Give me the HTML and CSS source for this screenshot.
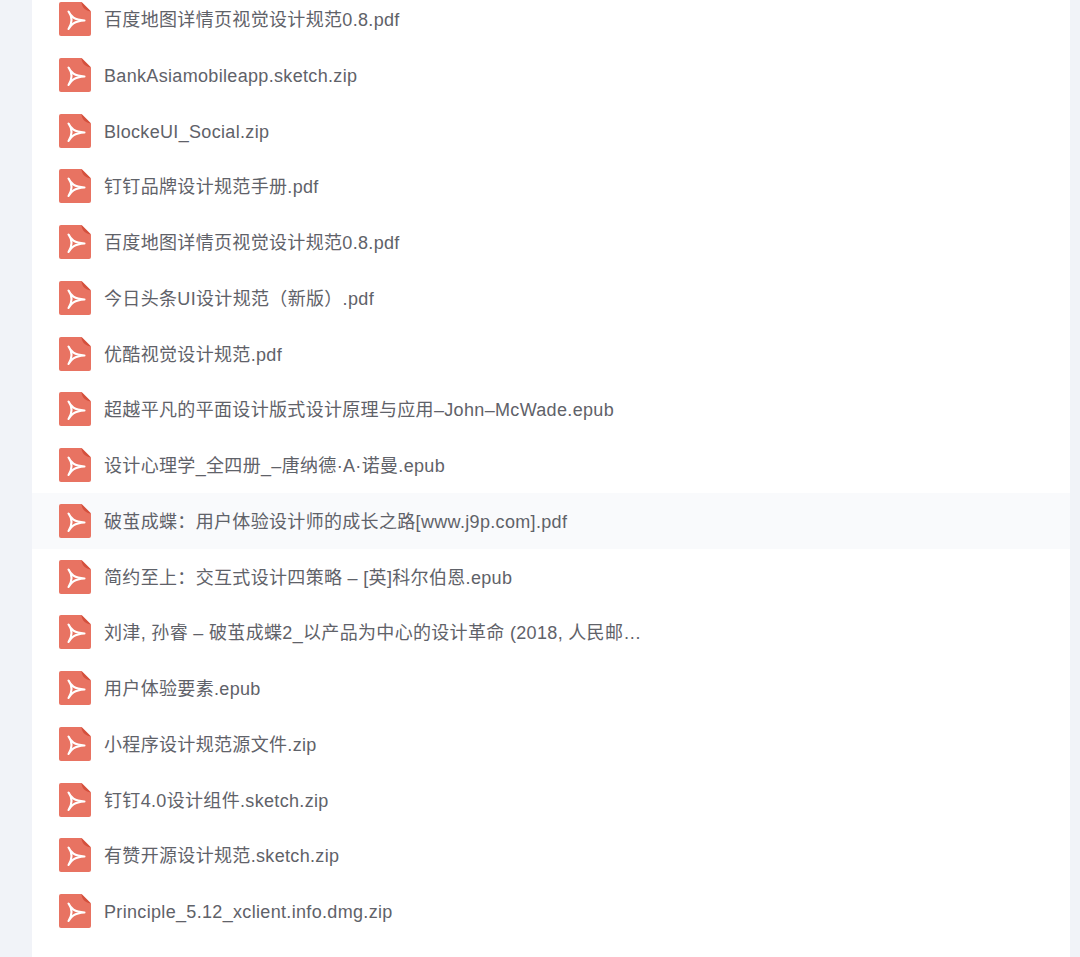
FILE: index.html
```html
<!DOCTYPE html>
<html lang="en">
<head>
    <meta charset="UTF-8">
    <meta name="viewport" content="width=device-width, initial-scale=1.0">
    <title>Files</title>
    <link rel="stylesheet" href="styles.css">
</head>

<body>
<svg class="sprite" width="0" height="0">
    <symbol id="pdf" viewBox="0 0 32 34">
        <path d="M2 0H22.500L32 9.500V32a2 2 0 0 1-2 2H2a2 2 0 0 1-2-2V2a2 2 0 0 1 2-2z" fill="#e87362"/>
        <path d="M22.500 0L32 9.500C28 9.500 22.500 6 22.500 0z" fill="#d4503d"/>
        <path d="M9.500 9.500C12 14.500 15 17.800 25.500 18.500C15 19.200 12 22.500 9.500 27C13.500 21 13.500 15 9.500 9.500z" fill="none" stroke="#fff" stroke-width="2.100" stroke-linejoin="round"/>
    </symbol>
</svg>

<div class="panel">
    <ul class="file-list">
        <li class="file-row"><svg class="file-icon"><use href="#pdf"/></svg><span class="file-name">百度地图详情页视觉设计规范0.8.pdf</span></li>
        <li class="file-row"><svg class="file-icon"><use href="#pdf"/></svg><span class="file-name">BankAsiamobileapp.sketch.zip</span></li>
        <li class="file-row"><svg class="file-icon"><use href="#pdf"/></svg><span class="file-name">BlockeUI_Social.zip</span></li>
        <li class="file-row"><svg class="file-icon"><use href="#pdf"/></svg><span class="file-name">钉钉品牌设计规范手册.pdf</span></li>
        <li class="file-row"><svg class="file-icon"><use href="#pdf"/></svg><span class="file-name">百度地图详情页视觉设计规范0.8.pdf</span></li>
        <li class="file-row"><svg class="file-icon"><use href="#pdf"/></svg><span class="file-name">今日头条UI设计规范（新版）.pdf</span></li>
        <li class="file-row"><svg class="file-icon"><use href="#pdf"/></svg><span class="file-name">优酷视觉设计规范.pdf</span></li>
        <li class="file-row"><svg class="file-icon"><use href="#pdf"/></svg><span class="file-name">超越平凡的平面设计版式设计原理与应用–John–McWade.epub</span></li>
        <li class="file-row"><svg class="file-icon"><use href="#pdf"/></svg><span class="file-name">设计心理学_全四册_–唐纳德·A·诺曼.epub</span></li>
        <li class="file-row active"><svg class="file-icon"><use href="#pdf"/></svg><span class="file-name">破茧成蝶：用户体验设计师的成长之路[www.j9p.com].pdf</span></li>
        <li class="file-row"><svg class="file-icon"><use href="#pdf"/></svg><span class="file-name">简约至上：交互式设计四策略 – [英]科尔伯恩.epub</span></li>
        <li class="file-row"><svg class="file-icon"><use href="#pdf"/></svg><span class="file-name">刘津, 孙睿 – 破茧成蝶2_以产品为中心的设计革命 (2018, 人民邮…</span></li>
        <li class="file-row"><svg class="file-icon"><use href="#pdf"/></svg><span class="file-name">用户体验要素.epub</span></li>
        <li class="file-row"><svg class="file-icon"><use href="#pdf"/></svg><span class="file-name">小程序设计规范源文件.zip</span></li>
        <li class="file-row"><svg class="file-icon"><use href="#pdf"/></svg><span class="file-name">钉钉4.0设计组件.sketch.zip</span></li>
        <li class="file-row"><svg class="file-icon"><use href="#pdf"/></svg><span class="file-name">有赞开源设计规范.sketch.zip</span></li>
        <li class="file-row"><svg class="file-icon"><use href="#pdf"/></svg><span class="file-name">Principle_5.12_xclient.info.dmg.zip</span></li>
    </ul>
</div>
</body>
</html>
```

FILE: styles.css
```css
* {
    margin: 0;
    padding: 0;
    box-sizing: border-box;
}

html, body {
    height: 957px;
    overflow: hidden;
}

body {
    font-family: "Liberation Sans", "Noto Sans CJK SC", sans-serif;
    background-color: #f1f3f8;
    color: #5f6269;
}

.sprite {
    display: block;
    height: 0;
}

.panel {
    height: 957px;
    margin: 0 10px 0 32px;
    background-color: #fff;
    overflow: hidden;
}

.file-list {
    list-style: none;
    margin-top: -8.700px;
}

.file-row {
    display: flex;
    align-items: center;
    gap: 13px;
    height: 55.75px;
    padding-left: 27px;
}

.file-row.active {
    background-color: #f9fafc;
}

.file-icon {
    width: 32px;
    height: 34px;
    flex-shrink: 0;
}

.file-name {
    display: block;
    margin-top: 2px;
    font-size: 18px;
    line-height: 18px;
    letter-spacing: 0.33px;
    white-space: nowrap;
}
```
